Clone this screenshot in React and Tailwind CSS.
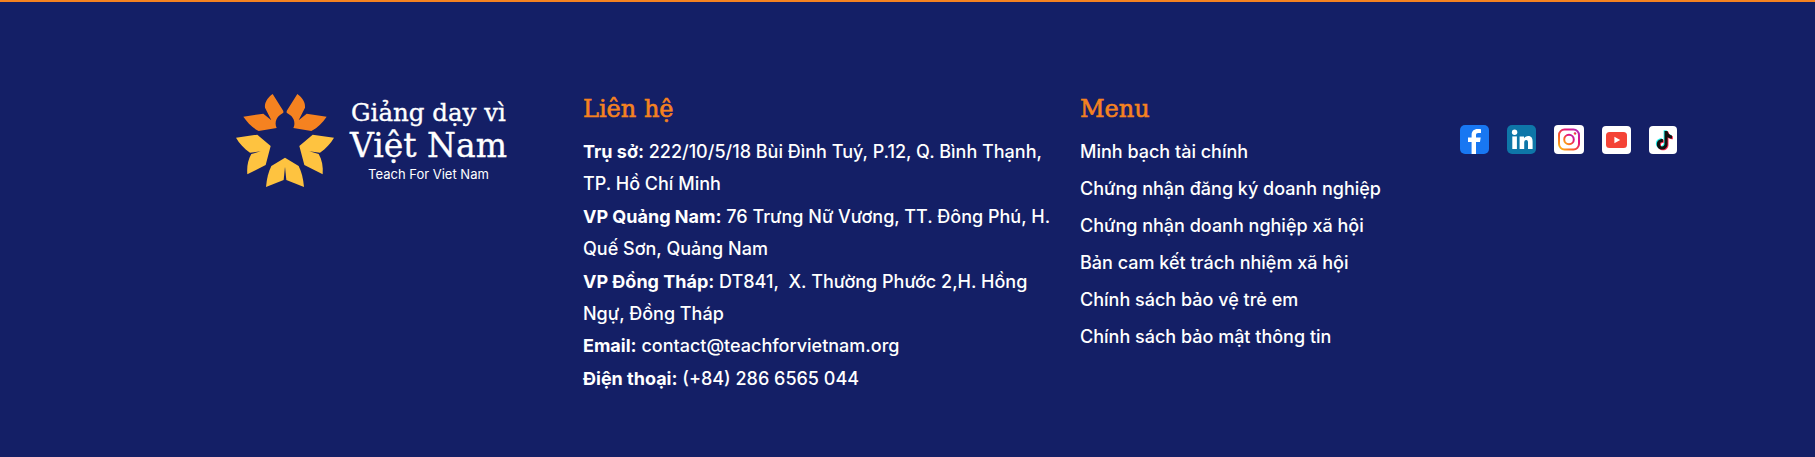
const serif = "font-['DejaVu_Serif',serif] [-webkit-text-stroke:0.35px_currentColor]";
const heading = "font-['DejaVu_Serif',serif] [-webkit-text-stroke:0.6px_currentColor] text-[24px] leading-[36px] text-[#f58220]";

const contacts = [
  ["Trụ sở:", " 222/10/5/18 Bùi Đình Tuý, P.12, Q. Bình Thạnh, TP. Hồ Chí Minh"],
  ["VP Quảng Nam:", " 76 Trưng Nữ Vương, TT. Đông Phú, H. Quế Sơn, Quảng Nam"],
  ["VP Đồng Tháp:", " DT841,\u00a0 X. Thường Phước 2,H. Hồng Ngự, Đồng Tháp"],
  ["Email:", " contact@teachforvietnam.org"],
  ["Điện thoại:", " (+84) 286 6565 044"],
];

const menu = [
  "Minh bạch tài chính",
  "Chứng nhận đăng ký doanh nghiệp",
  "Chứng nhận doanh nghiệp xã hội",
  "Bản cam kết trách nhiệm xã hội",
  "Chính sách bảo vệ trẻ em",
  "Chính sách bảo mật thông tin",
];

function Petals({ d, fill }) {
  return (
    <g fill={fill}>
      <path d={d} />
      <path d={d} transform="matrix(-1 0 0 1 330 0)" />
    </g>
  );
}

function Logo() {
  return (
    <svg viewBox="0 0 330 330" className="w-[110px] h-[110px] shrink-0">
      <Petals fill="#f58220" d="M128 27C112 38 103 54 105 68L124 106L100 86L40 95C52 112 66 128 86 138L140 129C134 118 136 100 150 90L160 83L160 78Z" />
      <Petals fill="#fec340" d="M18 158L82 149L122 183L107 240L52 268C50 245 54 224 64 207L92 199L60 203C42 190 28 175 18 158Z" />
      <Petals fill="#fec340" d="M124 243L165 218L165 245L161 285L108 306C110 282 115 262 124 243Z" />
    </svg>
  );
}

function Facebook() {
  return (
    <svg viewBox="0 0 29 29" className="w-[29px] h-[29px]">
      <rect width="29" height="29" rx="5" fill="#1877f2" />
      <path d="M16 29V17H20L20.7 12.6H16V10.2C16 8.9 16.6 8 18.3 8H21V4.2C20.2 4.1 19 4 17.6 4C13.8 4 11.6 6.2 11.6 9.9V12.6H8V17H11.6V29Z" fill="#fff" />
    </svg>
  );
}

function Linkedin() {
  return (
    <svg viewBox="0 0 29 29" className="w-[29px] h-[29px]">
      <rect width="29" height="29" rx="5" fill="#0e76a8" />
      <circle cx="7.6" cy="7.2" r="2.7" fill="#fff" />
      <rect x="5.3" y="11.4" width="4.6" height="12.6" fill="#fff" />
      <path d="M12.6 11.4H17V13.2C17.8 12 19.2 11 21.2 11C24.6 11 25.6 13.3 25.6 16.6V24H21V17.6C21 16 20.6 14.9 19.2 14.9C17.8 14.9 17.2 16 17.2 17.6V24H12.6Z" fill="#fff" />
    </svg>
  );
}

function Instagram() {
  return (
    <svg viewBox="0 0 30 29" className="w-[30px] h-[29px]">
      <defs>
        <linearGradient id="ig" x1="0" y1="1" x2="1" y2="0">
          <stop offset="0" stopColor="#fdc20f" />
          <stop offset="0.35" stopColor="#f9592a" />
          <stop offset="0.7" stopColor="#e1107f" />
          <stop offset="1" stopColor="#a92fc1" />
        </linearGradient>
      </defs>
      <rect width="30" height="29" rx="4" fill="#fff" />
      <rect x="5" y="4.5" width="20" height="20" rx="5.5" fill="none" stroke="url(#ig)" strokeWidth="2" />
      <circle cx="15" cy="14.5" r="4.8" fill="none" stroke="url(#ig)" strokeWidth="2" />
      <circle cx="21" cy="8.5" r="1.3" fill="url(#ig)" />
    </svg>
  );
}

function Youtube() {
  return (
    <svg viewBox="0 0 29 28" className="w-[29px] h-[28px]">
      <rect width="29" height="28" rx="4" fill="#fff" />
      <rect x="4" y="6" width="21" height="16" rx="3.5" fill="#f44336" />
      <path d="M12.4 10.8L18.2 14L12.4 17.2Z" fill="#fff" />
    </svg>
  );
}

function Tiktok() {
  const d = "M15.5 5H18.6C18.9 7.6 20.4 9.2 23 9.5V12.6C21.3 12.6 19.9 12.1 18.6 11.2V18C18.6 21.4 16.2 23.6 13.2 23.6C10.2 23.6 7.8 21.4 7.8 18.2C7.8 15 10.5 12.6 13.9 13V16.2C12.4 15.8 11 16.7 11 18.2C11 19.6 12 20.5 13.2 20.5C14.5 20.5 15.5 19.5 15.5 18Z";
  return (
    <svg viewBox="0 0 28 28" className="w-[28px] h-[28px]">
      <rect width="28" height="28" rx="4" fill="#fff" />
      <path d={d} fill="#25f4ee" transform="translate(-0.9 -0.7)" />
      <path d={d} fill="#fe2c55" transform="translate(0.9 0.7)" />
      <path d={d} fill="#111" />
    </svg>
  );
}

export default function App() {
  return (
    <footer className="h-[457px] border-t-2 border-[#f58220] bg-[#141f66] text-white font-['Inter',sans-serif]">
      <div className="flex pl-[230px] pt-[83px]">
        <div className="w-[353px] flex items-start gap-[10px]">
          <Logo />
          <div className="flex flex-col items-center pt-[13px]">
            <span className={serif + " text-[24.5px] leading-[30px]"}>Giảng dạy vì</span>
            <span className={serif + " text-[33px] leading-[36px]"}>Việt Nam</span>
            <span className="text-[13px] leading-[16px] mt-[2px]">Teach For Viet Nam</span>
          </div>
        </div>

        <div className="w-[497px] pt-[6px]">
          <h3 className={heading + " mb-[9px]"}>Liên hệ</h3>
          <div className="w-[472px] text-[18px] leading-[32.4px] font-medium">
            {contacts.map(([label, value]) => (
              <p key={label}>
                <b className="font-bold">{label}</b>
                {value}
              </p>
            ))}
          </div>
        </div>

        <div className="w-[380px] pt-[6px]">
          <h3 className={heading + " mb-[6px]"}>Menu</h3>
          <ul className="flex flex-col">
            {menu.map((item) => (
              <li key={item} className="text-[18px] leading-[37px] font-medium">{item}</li>
            ))}
          </ul>
        </div>

        <div className="flex items-center gap-[18px] h-[29px] mt-[40px]">
          <Facebook />
          <Linkedin />
          <Instagram />
          <Youtube />
          <Tiktok />
        </div>
      </div>
    </footer>
  );
}
